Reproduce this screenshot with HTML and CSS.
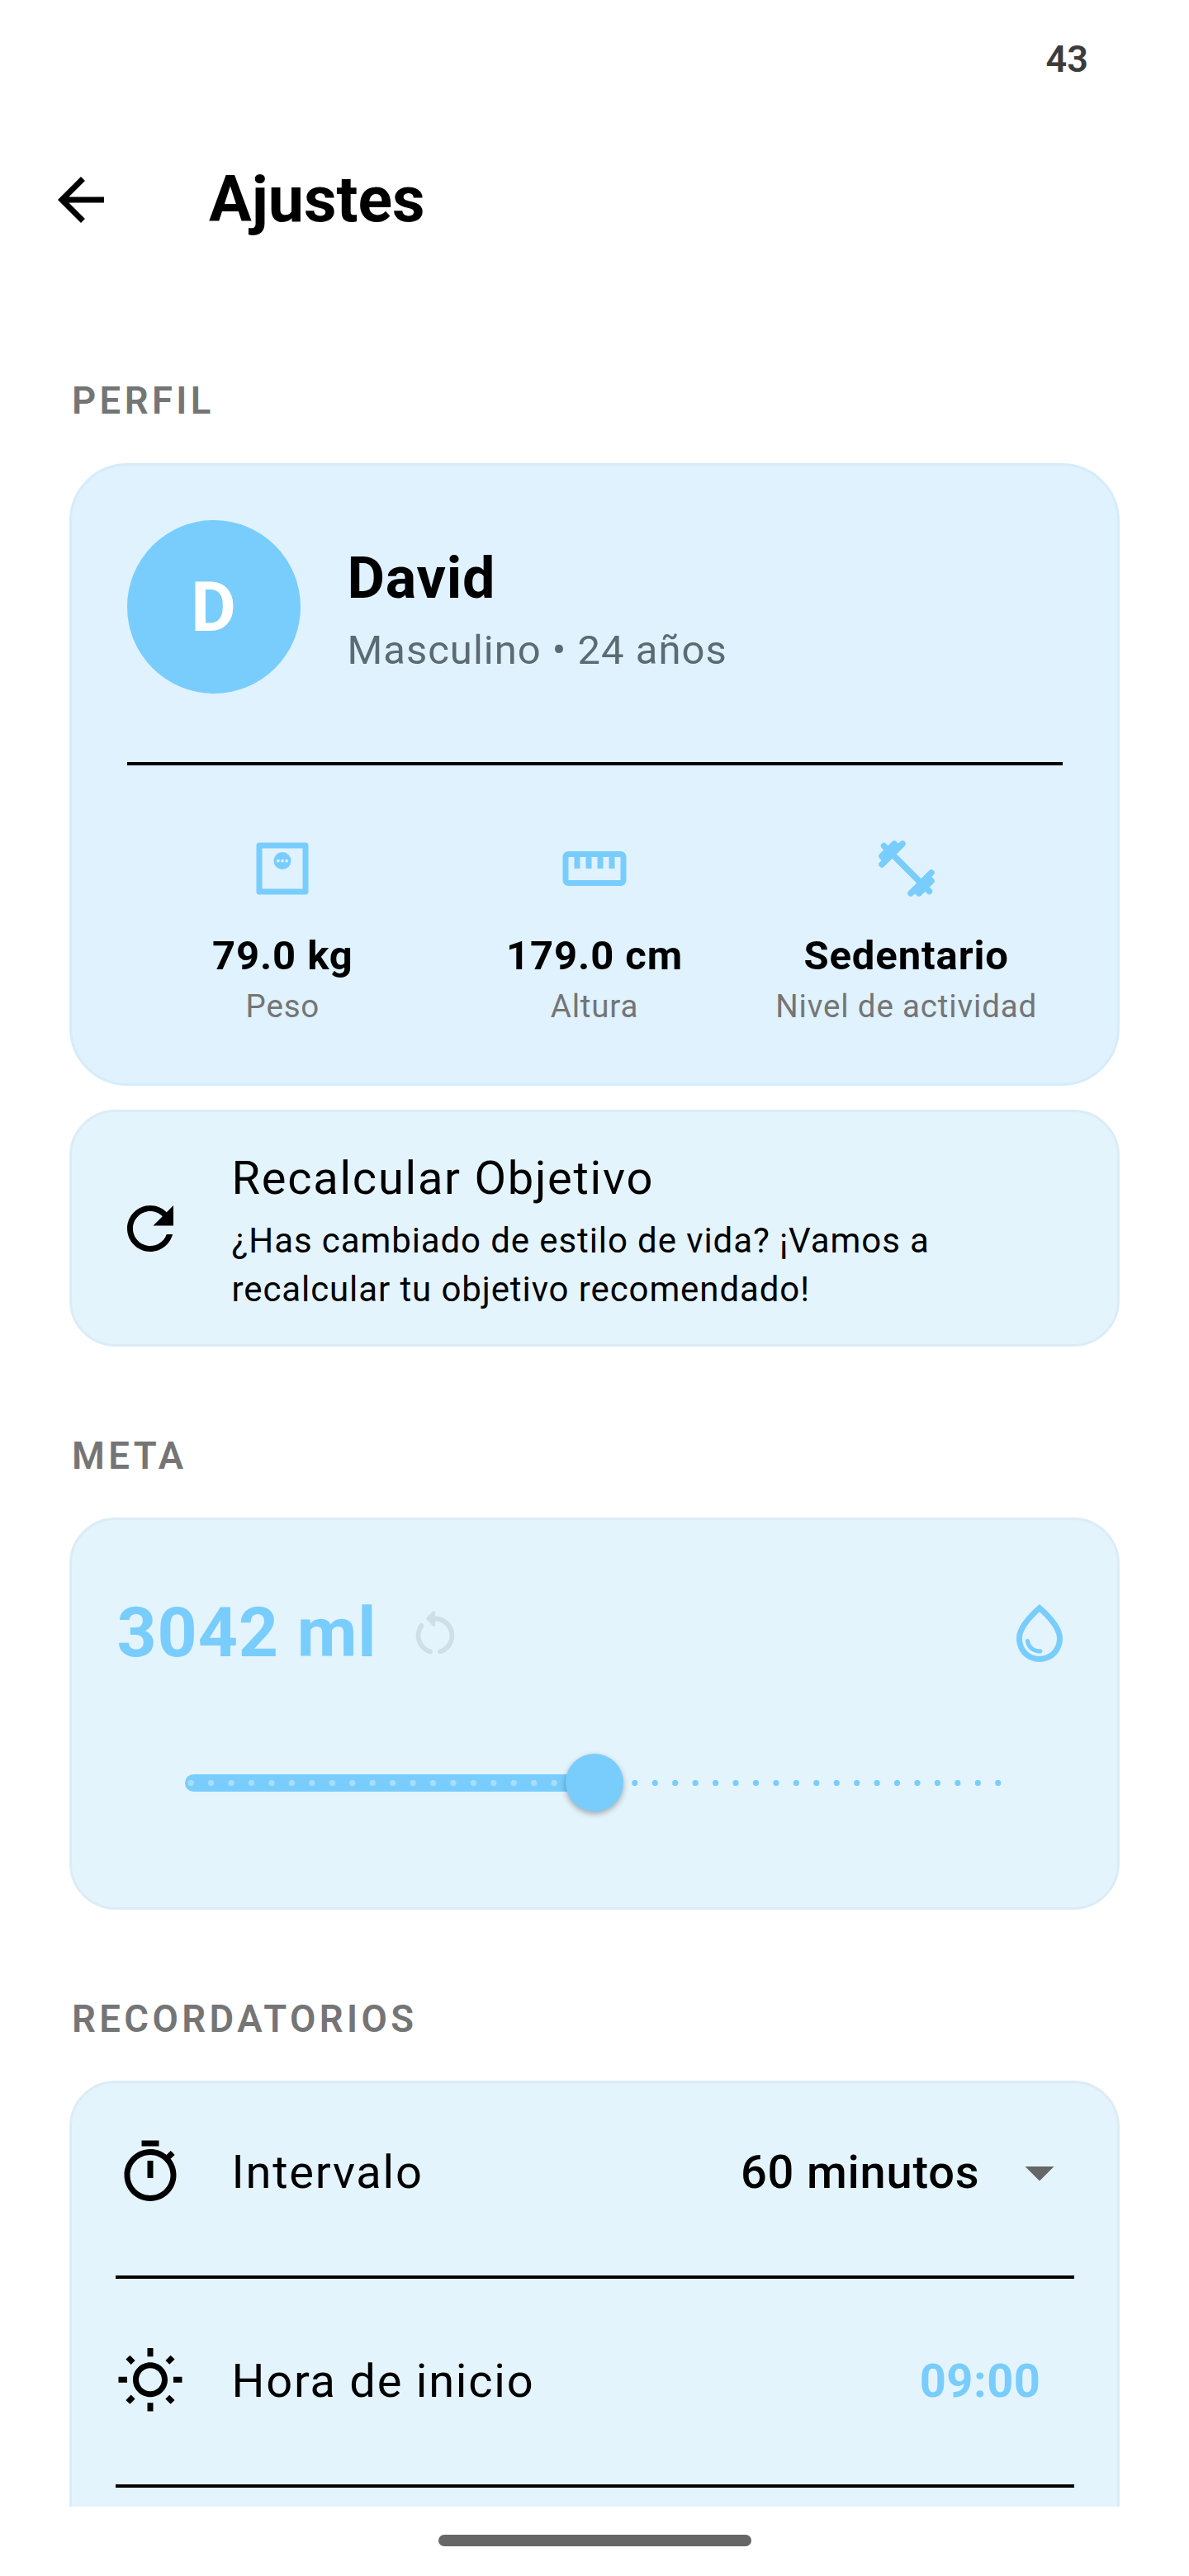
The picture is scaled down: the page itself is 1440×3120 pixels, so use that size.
FILE: index.html
```html
<!DOCTYPE html>
<html lang="es">

<head>
    <meta charset="UTF-8">
    <meta name="viewport" content="width=device-width, initial-scale=1.0">
    <title>Ajustes</title>
    <link rel="stylesheet" href="styles.css">
</head>

<body>
    <div class="screen">
        <div class="status-bar">43</div>

        <header class="app-bar">
            <svg class="icon" viewBox="0 0 24 24"><path d="M20 11H7.83l5.59-5.59L12 4l-8 8 8 8 1.41-1.41L7.83 13H20v-2z" /></svg>
            <h1 class="app-title">Ajustes</h1>
        </header>

        <main class="content">
            <h2 class="section-label first">PERFIL</h2>

            <section class="card profile-card">
                <div class="profile-head">
                    <div class="avatar">D</div>
                    <div>
                        <div class="profile-name">David</div>
                        <div class="profile-meta">Masculino • 24 años</div>
                    </div>
                </div>
                <div class="divider"></div>
                <div class="stats">
                    <div class="stat">
                        <svg class="icon sky" viewBox="0 0 24 24">
                            <path fill-rule="evenodd" d="M4 3h16a1 1 0 0 1 1 1v16a1 1 0 0 1-1 1H4a1 1 0 0 1-1-1V4a1 1 0 0 1 1-1zm1 2v14h14V5z" />
                            <circle cx="12" cy="9.3" r="3" />
                            <path class="scale-dots" d="M10.1 8.85h.9v.9h-.9zM11.55 8.85h.9v.9h-.9zM13 8.85h.9v.9h-.9z" />
                        </svg>
                        <div class="stat-value">79.0 kg</div>
                        <div class="stat-label">Peso</div>
                    </div>
                    <div class="stat">
                        <svg class="icon sky" viewBox="0 0 24 24"><path d="M21 6H3c-1.1 0-2 .9-2 2v8c0 1.1.9 2 2 2h18c1.1 0 2-.9 2-2V8c0-1.1-.9-2-2-2zm0 10H3V8h2v4h2V8h2v4h2V8h2v4h2V8h2v4h2V8h2v8z" /></svg>
                        <div class="stat-value">179.0 cm</div>
                        <div class="stat-label">Altura</div>
                    </div>
                    <div class="stat">
                        <svg class="icon sky dumbbell" viewBox="0 0 24 24"><path d="M20.57 14.86l.72-.72c.39-.39.39-1.02 0-1.41l-.02-.02c-.39-.39-1.02-.39-1.41 0L17 15.57 8.43 7l2.86-2.86c.39-.39.39-1.02 0-1.41l-.02-.02c-.39-.39-1.02-.39-1.41 0l-.72.72-.72-.72c-.39-.39-1.03-.39-1.42 0L5.57 4.14l-.72-.72c-.39-.39-1.04-.39-1.43 0-.39.39-.39 1.04 0 1.43l.72.72L2.71 6.99c-.39.39-.39 1.02 0 1.42l.72.72-.72.72c-.39.39-.39 1.02 0 1.41l.02.02c.39.39 1.02.39 1.41 0L7 8.43 15.57 17l-2.86 2.86c-.39.39-.39 1.02 0 1.41l.02.02c.39.39 1.02.39 1.41 0l.72-.72.72.72c.39.39 1.02.39 1.42 0l1.42-1.42.72.72c.39.39 1.04.39 1.43 0 .39-.39.39-1.04 0-1.43l-.72-.72 1.43-1.42c.39-.39.39-1.02 0-1.42l-.72-.72z" /></svg>
                        <div class="stat-value">Sedentario</div>
                        <div class="stat-label">Nivel de actividad</div>
                    </div>
                </div>
            </section>

            <section class="card recalc-card">
                <svg class="icon" viewBox="0 0 24 24"><path d="M17.65 6.35C16.2 4.9 14.21 4 12 4c-4.42 0-7.99 3.58-7.99 8s3.57 8 7.99 8c3.73 0 6.84-2.55 7.73-6h-2.08c-.82 2.33-3.04 4-5.65 4-3.31 0-6-2.69-6-6s2.69-6 6-6c1.66 0 3.14.69 4.22 1.78L13 11h7V4l-2.35 2.35z" /></svg>
                <div>
                    <div class="recalc-title">Recalcular Objetivo</div>
                    <div class="recalc-text">¿Has cambiado de estilo de vida? ¡Vamos a recalcular tu objetivo recomendado!</div>
                </div>
            </section>

            <h2 class="section-label">META</h2>

            <section class="card goal-card">
                <div class="goal-head">
                    <span class="goal-value">3042 ml</span>
                    <svg class="reset-icon" viewBox="0 0 24 24"><path d="M12 5V3.21c0-.45-.54-.67-.85-.35l-2.8 2.79c-.2.2-.2.51 0 .71l2.79 2.79c.32.31.86.09.86-.36V7c3.31 0 6 2.69 6 6 0 2.72-1.83 5.02-4.31 5.75-.42.12-.69.52-.69.95 0 .65.62 1.16 1.25.97C17.57 19.7 20 16.64 20 13c0-4.42-3.58-8-8-8zM6 13c0-1.34.44-2.58 1.19-3.59.3-.4.26-.95-.09-1.31-.42-.42-1.14-.38-1.5.1C4.6 9.53 4 11.19 4 13c0 3.64 2.43 6.7 5.75 7.67.63.19 1.25-.32 1.25-.97 0-.43-.27-.83-.69-.95C7.83 18.02 6 15.72 6 13z" /></svg>
                    <svg class="icon sky drop-icon" viewBox="0 0 24 24"><path d="M12 2c-5.33 4.55-8 8.48-8 11.8 0 4.98 3.8 8.2 8 8.2s8-3.22 8-8.2c0-3.32-2.67-7.25-8-11.8zm0 18c-3.35 0-6-2.57-6-6.2 0-2.34 1.95-5.44 6-9.14 4.05 3.7 6 6.79 6 9.14 0 3.63-2.65 6.2-6 6.2zm-4.17-6c.37 0 .67.26.74.62.41 2.22 2.28 2.98 3.64 2.87.43-.02.79.32.79.75 0 .4-.32.73-.72.75-2.13.13-4.62-1.09-5.19-4.12-.08-.45.28-.87.74-.87z" /></svg>
                </div>
                <div class="slider">
                    <div class="slider-fill"></div>
                    <div class="slider-thumb"></div>
                </div>
            </section>

            <h2 class="section-label">RECORDATORIOS</h2>

            <section class="card reminders-card">
                <div class="row first-row">
                    <svg class="icon" viewBox="0 0 24 24"><path d="M15 1H9v2h6V1zm-4 13h2V8h-2v6zm8.03-6.61l1.42-1.42c-.43-.51-.9-.99-1.41-1.41l-1.42 1.42C16.07 4.74 14.12 4 12 4c-4.97 0-9 4.03-9 9s4.02 9 9 9 9-4.03 9-9c0-2.12-.74-4.07-1.97-5.61zM12 20c-3.87 0-7-3.13-7-7s3.13-7 7-7 7 3.13 7 7-3.13 7-7 7z" /></svg>
                    <span class="row-label">Intervalo</span>
                    <span class="row-select">60 minutos</span>
                    <svg class="icon grey" viewBox="0 0 24 24"><path d="M7 10l5 5 5-5z" /></svg>
                </div>
                <div class="row">
                    <svg class="icon" viewBox="0 0 24 24"><path d="M6.76 4.84l-1.8-1.79-1.41 1.41 1.79 1.79zM1 10.5h3v2H1zM11 .55h2V3.5h-2zm8.04 2.495l1.408 1.407-1.79 1.79-1.407-1.408zm-1.8 15.115l1.79 1.8 1.41-1.41-1.8-1.79zM20 10.5h3v2h-3zm-8-5c-3.31 0-6 2.69-6 6s2.69 6 6 6 6-2.69 6-6-2.69-6-6-6zm0 10c-2.21 0-4-1.79-4-4s1.79-4 4-4 4 1.79 4 4-1.79 4-4 4zm-1 4h2v2.95h-2zm-7.45-.96l1.41 1.41 1.79-1.8-1.41-1.41z" /></svg>
                    <span class="row-label">Hora de inicio</span>
                    <span class="row-time">09:00</span>
                </div>
                <div class="row"></div>
            </section>
        </main>

        <footer class="nav-area">
            <div class="home-bar"></div>
        </footer>
    </div>
</body>

</html>
```

FILE: styles.css
```css
:root {
    --sky: #79cdfc;
    --card: #e4f4fd;
    --card-line: #dcecf6;
}

* {
    box-sizing: border-box;
}

body {
    margin: 0;
    background: #fff;
    color: #000;
    font-family: Roboto, "Liberation Sans", sans-serif;
}

.screen {
    display: flex;
    flex-direction: column;
    width: 1440px;
    height: 3120px;
    overflow: hidden;
}

.status-bar {
    height: 140px;
    padding: 48px 122px 0 0;
    text-align: right;
    font-size: 45px;
    line-height: 48px;
    font-weight: 600;
    color: #3c3c3c;
}

/* header */
.app-bar {
    display: flex;
    align-items: center;
    height: 204px;
    padding-left: 56px;
}

.app-title {
    margin: 0 0 0 113px;
    font-size: 77px;
    line-height: 84px;
    font-weight: 700;
}

.icon {
    flex: none;
    display: block;
    width: 84px;
    height: 84px;
    fill: #000;
}

.icon.sky {
    fill: var(--sky);
}

.icon.grey {
    fill: #666;
}

.icon.dumbbell {
    stroke: var(--sky);
    stroke-width: 0.2;
}

/* scrolling part, cut off above the nav area */
.content {
    height: 2692px;
    padding: 0 84px;
    overflow: hidden;
}

.section-label {
    margin: 103px 0 44px;
    padding-left: 3px;
    font-size: 45.5px;
    line-height: 60px;
    font-weight: 600;
    letter-spacing: 4.4px;
    color: #757575;
}

.section-label.first {
    margin: 112px 0 45px;
}

.card {
    width: 1272px;
    background: var(--card);
    border: 3.5px solid var(--card-line);
    border-radius: 70px;
}

/* profile */
.profile-card {
    height: 754px;
    padding: 66px 66.5px 0;
    background: #dff2fe;
    border-color: #d5ecfb;
}

.profile-head {
    display: flex;
    align-items: center;
    gap: 57px;
}

.avatar {
    display: flex;
    align-items: center;
    justify-content: center;
    width: 210px;
    height: 210px;
    border-radius: 50%;
    background: var(--sky);
    color: #fff;
    font-size: 84px;
    font-weight: 700;
}

.profile-name {
    margin-top: 6px;
    font-size: 70px;
    line-height: 82px;
    font-weight: 700;
    letter-spacing: 0.8px;
}

.profile-meta {
    margin-top: 18px;
    font-size: 49px;
    line-height: 58px;
    letter-spacing: 1px;
    color: #5c6a72;
}

.divider {
    height: 4px;
    margin-top: 83px;
    background: #000;
}

.stats {
    display: grid;
    grid-template-columns: repeat(3, 1fr);
    padding-top: 83px;
}

.stat {
    display: flex;
    flex-direction: column;
    align-items: center;
}

.stat-value {
    margin-top: 34px;
    font-size: 49px;
    line-height: 60px;
    font-weight: 700;
    letter-spacing: 0.9px;
}

.stat-label {
    margin-top: 8px;
    font-size: 38.5px;
    line-height: 46px;
    letter-spacing: 0.85px;
    color: #757575;
}

.scale-dots {
    fill: #dff2fe;
}

/* recalculate */
.recalc-card {
    display: flex;
    align-items: center;
    gap: 57px;
    height: 287px;
    margin-top: 29px;
    padding: 0 52.5px;
    border-radius: 56px;
}

.recalc-title {
    margin-top: 9px;
    font-size: 56px;
    line-height: 66px;
    letter-spacing: 1.75px;
}

.recalc-text {
    margin-top: 13px;
    width: 980px;
    font-size: 42px;
    line-height: 59px;
    letter-spacing: 0.9px;
}

/* goal */
.goal-card {
    height: 475px;
    padding: 0 52.5px 0 54.5px;
    border-radius: 56px;
}

.goal-head {
    display: flex;
    align-items: center;
    height: 84px;
    margin-top: 94.5px;
}

.goal-value {
    font-size: 84px;
    line-height: 84px;
    font-weight: 700;
    letter-spacing: 0.9px;
    color: var(--sky);
}

.reset-icon {
    flex: none;
    width: 70px;
    height: 70px;
    margin-left: 36px;
    fill: #d0dfe6;
}

.drop-icon {
    margin-left: auto;
}

.slider {
    position: relative;
    width: 990px;
    height: 21px;
    margin: 129px 0 0 82px;
    background: radial-gradient(circle, var(--sky) 3.4px, transparent 4px) -5px 0 / 24.45px 100% repeat-x;
}

.slider-fill {
    width: 496px;
    height: 100%;
    border-radius: 11px 0 0 11px;
    background: radial-gradient(circle, #a8defc 3.4px, transparent 4px) -5px 0 / 24.45px 100% repeat-x, var(--sky);
}

.slider-thumb {
    position: absolute;
    top: -24.5px;
    left: 461px;
    width: 70px;
    height: 70px;
    border-radius: 50%;
    background: var(--sky);
    box-shadow: 0 3px 7px rgba(0, 0, 0, 0.3);
}

/* reminders */
.reminders-card {
    height: 760px;
    padding: 0 52.5px;
    border-radius: 56px;
}

.row {
    display: flex;
    align-items: center;
    height: 253px;
    border-bottom: 4px solid #000;
}

.row.first-row {
    height: 236.5px;
    padding-bottom: 17px;
}

.row-label {
    margin-left: 57px;
    font-size: 56px;
    letter-spacing: 1.75px;
}

.row-select {
    margin: 0 30px 0 auto;
    font-size: 56px;
    font-weight: 500;
    letter-spacing: 0.8px;
}

.row-time {
    margin: 0 40px 0 auto;
    font-size: 56px;
    font-weight: 700;
    letter-spacing: 0.5px;
    color: var(--sky);
}

/* gesture bar */
.nav-area {
    flex: 1;
    display: flex;
    justify-content: center;
    padding-top: 34px;
}

.home-bar {
    width: 379px;
    height: 14px;
    border-radius: 7px;
    background: #666;
}
```
